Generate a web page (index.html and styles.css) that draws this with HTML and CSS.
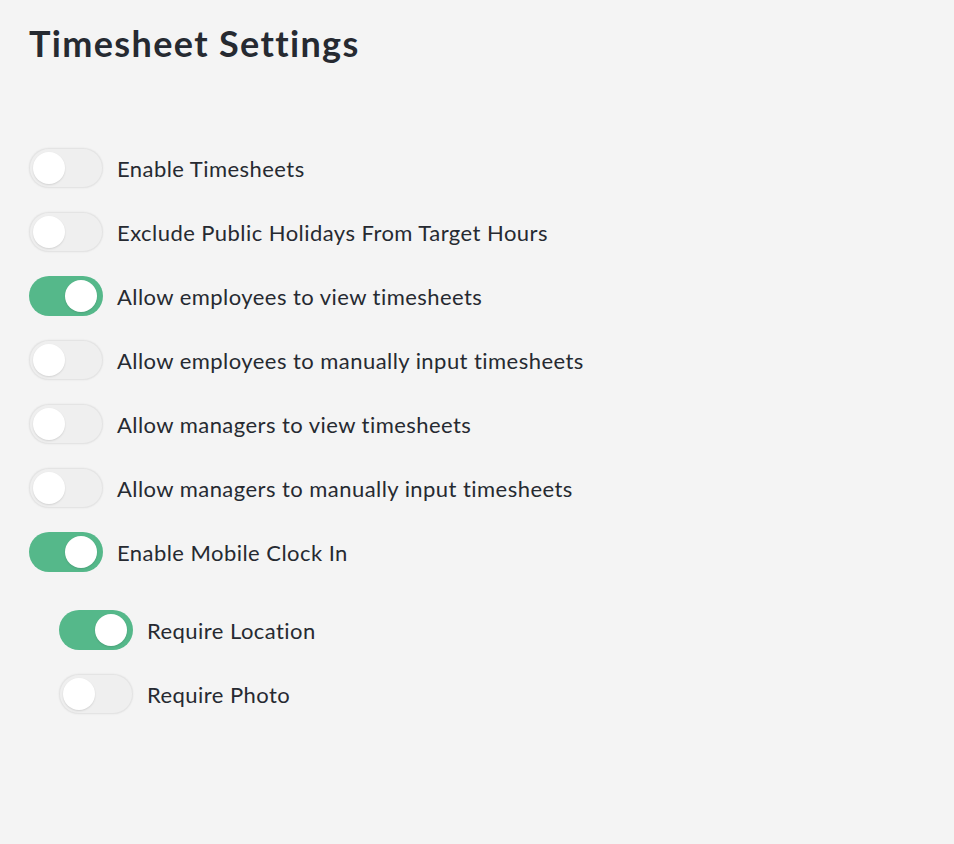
FILE: index.html
```html
<!DOCTYPE html>
<html>
<head>
<meta charset="utf-8">
<link rel="stylesheet" href="styles.css">
</head>
<body>
<div class="page">
  <h1 class="title">Timesheet Settings</h1>
  <div class="list">
    <div class="row"><span class="toggle"></span><span class="label">Enable Timesheets</span></div>
    <div class="row"><span class="toggle"></span><span class="label">Exclude Public Holidays From Target Hours</span></div>
    <div class="row"><span class="toggle on"></span><span class="label">Allow employees to view timesheets</span></div>
    <div class="row"><span class="toggle"></span><span class="label">Allow employees to manually input timesheets</span></div>
    <div class="row"><span class="toggle"></span><span class="label">Allow managers to view timesheets</span></div>
    <div class="row"><span class="toggle"></span><span class="label">Allow managers to manually input timesheets</span></div>
    <div class="row"><span class="toggle on"></span><span class="label">Enable Mobile Clock In</span></div>
    <div class="sub">
      <div class="row"><span class="toggle on"></span><span class="label">Require Location</span></div>
      <div class="row"><span class="toggle"></span><span class="label">Require Photo</span></div>
    </div>
  </div>
</div>
</body>
</html>
```
FILE: styles.css
```css
html, body {
  margin: 0;
  padding: 0;
  background: #f4f4f4;
}
body {
  font-family: Lato, "Noto Sans", sans-serif;
  color: #262a31;
  width: 954px;
  height: 844px;
}
.page {
  padding: 20px 29px;
}
.title {
  margin: 0;
  font-size: 36px;
  font-weight: 700;
  line-height: 46px;
  letter-spacing: 1.35px;
}
.list {
  margin-top: 82px;
  display: flex;
  flex-direction: column;
  gap: 24px;
}
.sub {
  margin-top: 14px;
  padding-left: 30px;
  display: flex;
  flex-direction: column;
  gap: 24px;
}
.row {
  display: flex;
  align-items: center;
  gap: 14px;
  height: 40px;
}
.toggle {
  position: relative;
  flex: none;
  width: 74px;
  height: 40px;
  border-radius: 20px;
  background: #efefef;
  box-shadow: inset 0 0 0 1px #e4e4e4, 0 0 2px rgba(0,0,0,0.08);
}
.toggle::after {
  content: "";
  position: absolute;
  top: 4px;
  left: 4px;
  width: 32px;
  height: 32px;
  border-radius: 50%;
  background: #fff;
  box-shadow: 0 1px 2px rgba(0,0,0,0.12);
}
.toggle.on {
  background: #55b88a;
  box-shadow: none;
}
.toggle.on::after {
  left: 36px;
}
.label {
  font-size: 22px;
  line-height: 26px;
  letter-spacing: 0.45px;
  padding-top: 2px;
}
```
